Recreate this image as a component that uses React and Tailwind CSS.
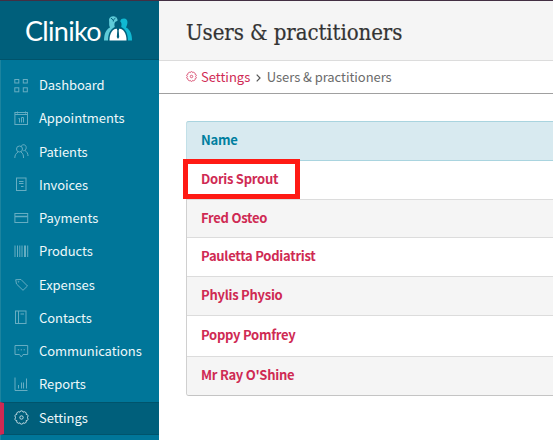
import React from 'react'
import clsx from 'clsx'

const GEAR_PATH =
  'M5.900 2.200Q6.100 .8 7.500 .8Q8.900 .8 9.100 2.200Q10.300 1.300 11.400 2.100Q12.800 3 12.100 4.300Q13.600 4.300 14 5.600Q14.400 7 13 7.500Q14.400 8.100 14 9.500Q13.600 10.800 12.100 10.700Q12.800 12 11.400 13Q10.300 13.700 9.100 12.800Q8.900 14.200 7.500 14.200Q6.100 14.200 5.900 12.800Q4.700 13.700 3.600 13Q2.200 12 2.900 10.700Q1.400 10.800 1 9.500Q.6 8.100 2 7.500Q.6 7 1 5.600Q1.400 4.300 2.900 4.300Q2.200 3 3.600 2.100Q4.700 1.300 5.900 2.200Z'

const icons = {
  dashboard: (
    <>
      <rect x=".8" y="1.5" width="4" height="3.5" />
      <rect x="9.3" y="1.5" width="4" height="3.5" />
      <rect x=".8" y="9.8" width="4" height="4" />
      <rect x="9.3" y="9.8" width="4" height="4" />
    </>
  ),
  appointments: (
    <>
      <rect x=".9" y="1.5" width="12.6" height="12" />
      <path d="M1 3.500H13.500M3.500 .5V2.500M11.500 .5V2.500M4.500 7.500H5.500V11.500M7.500 11.500V6.500H9.500V11.500" />
    </>
  ),
  patients: (
    <>
      <circle cx="5.5" cy="5" r="3" />
      <path d="M.8 14C.8 11 2 9.500 4 8M7 8C9 9.500 9.500 11 9.500 14M7 2.600C7.800 0 12.200 0 12.200 3.600C12.200 5.600 11 6.500 9.300 6.800M11 6.500C13 7.800 14 9.500 14 12" />
    </>
  ),
  invoices: (
    <>
      <rect x="2.5" y="1" width="9.5" height="12.5" />
      <path d="M5 4.500H9.500M5 6.500H9.500M7 9.500H9.500" />
    </>
  ),
  payments: (
    <>
      <rect x=".9" y="2.500" width="12.800" height="9" />
      <path d="M1 5.500H13.700" strokeWidth="1.500" />
    </>
  ),
  products: <path d="M1 1.500V13M3.500 1.500V13M5.800 1.500V13M8 1.500V13M10.500 1.500V13M11.500 1.500V13M13.700 1.500V13" />,
  expenses: (
    <>
      <path d="M1.700 2.700L7 2.500L13.500 9L9 13.300L2.500 7Z" />
      <circle cx="4.600" cy="4.800" r=".4" />
    </>
  ),
  contacts: (
    <>
      <rect x="1.500" y="1" width="10.500" height="12.500" />
      <path d="M4.500 1V13.500M6.500 4H10" />
    </>
  ),
  communications: (
    <>
      <path d="M1 1.500H13.700V10.500H9L7.300 13L5.500 10.500H1Z" />
      <path d="M3.800 5.800H5.100M6.700 5.800H8M9.600 5.800H10.900" />
    </>
  ),
  reports: <path d="M1 .5V13.500H13.500M4.500 11.500V8M7.500 11.500V5.500M9.500 11.500V5.500M12.500 11.500V1.500" />,
  settings: (
    <>
      <path d={GEAR_PATH} />
      <circle cx="7.500" cy="7.500" r="1.700" />
    </>
  )
}

const navItems = [
  { icon: 'dashboard', label: 'Dashboard' },
  { icon: 'appointments', label: 'Appointments' },
  { icon: 'patients', label: 'Patients' },
  { icon: 'invoices', label: 'Invoices' },
  { icon: 'payments', label: 'Payments' },
  { icon: 'products', label: 'Products' },
  { icon: 'expenses', label: 'Expenses' },
  { icon: 'contacts', label: 'Contacts' },
  { icon: 'communications', label: 'Communications' },
  { icon: 'reports', label: 'Reports' },
  { icon: 'settings', label: 'Settings', active: true }
]

const users = [
  { name: 'Doris Sprout', height: 'h-[39px]', highlighted: true },
  { name: 'Fred Osteo', height: 'h-[38px]' },
  { name: 'Pauletta Podiatrist', height: 'h-[39px]' },
  { name: 'Phylis Physio', height: 'h-[39px]' },
  { name: 'Poppy Pomfrey', height: 'h-[41px]' },
  { name: "Mr Ray O'Shine", height: 'h-[38px]' }
]

const Icon = ({ name, className }) => (
  <svg viewBox="0 0 15 15" fill="none" stroke="currentColor" strokeWidth="1" className={className}>
    {icons[name]}
  </svg>
)

const Logo = () => (
  <div className="flex h-[59px] shrink-0 items-center border-b border-[#00536b] bg-[#005f7b] pl-[25px]">
    <span className="w-[79px] pt-px whitespace-nowrap font-['Lato','Noto_Sans',sans-serif] text-[27px] leading-none tracking-[-0.7px] text-white">
      Cliniko
    </span>
    <svg viewBox="0 0 28 26" className="-mt-[5px] h-[26px] w-[28px] shrink-0">
      {/* left figure */}
      <path d="M0 25.500C0 19 2 14.500 6 12.500C4.500 10 5.500 8 5 4.500C5.500 0 13 0 13.500 4.500C13.500 8 12.500 9 12.500 11V25.500Z" fill="#5fcbd8" />
      <path d="M6.800 3L9.300 5L11.500 3M9.300 5V6.500" fill="none" stroke="#005f7b" strokeWidth="1" />
      {/* right figure */}
      <path d="M15.500 25.500V10C16.500 7 15.500 3.500 20 3.500C24.500 3.500 24 9 22 12.500C26 14.500 28 19 28 25.500Z" fill="#10b9d2" />
      {/* front figure */}
      <path d="M4 26C4 19 6 14.500 10.800 12C9.800 8 11 6 14 6C17 6 18.200 8 17.200 12C22 14.500 24 19 24 26Z" fill="#005f7b" />
      <path d="M5.500 25.500C5.500 18 8.500 13.500 14 13.500C19.500 13.500 22.500 18 22.500 25.500Z" fill="#fff" />
      <path d="M12.500 13H15.500L14.700 15.500L15.200 22L14 24L12.800 22L13.300 15.500Z" fill="#005f7b" />
    </svg>
  </div>
)

const NavItem = ({ icon, label, active }) => (
  <li
    className={clsx(
      'flex h-[33.25px] items-center pb-[2px] text-[13px] tracking-[-0.07px] text-[#eef8fa]',
      active
        ? 'border-y border-l-4 border-y-[#00546c] border-l-[#cf2a53] bg-[#005f7b] pl-[10px]'
        : 'pl-[14px]'
    )}
  >
    <Icon
      name={icon}
      className={clsx('mr-[10px] h-[15px] w-[15px] shrink-0', active ? 'text-[#c3dce3]' : 'text-[#66adc2]')}
    />
    <span className="pb-px leading-none">{label}</span>
  </li>
)

const Sidebar = () => (
  <aside className="flex w-[159px] shrink-0 flex-col bg-[#007699] shadow-[inset_1px_0_0_#1c849f]">
    <Logo />
    <ul className="pt-[9.5px]">
      {navItems.map((item) => (
        <NavItem key={item.label} {...item} />
      ))}
    </ul>
  </aside>
)

const App = () => {
  return (
    <div className="flex h-[440px] w-[553px] flex-col overflow-hidden bg-white font-['Noto_Sans_CJK_SC','Noto_Sans',sans-serif]">
      <div className="h-px shrink-0 bg-[#432f43]" />
      <div className="flex min-h-0 flex-1">
        <Sidebar />

        <main className="min-w-0 flex-1">
          <header className="flex h-[60px] items-center border-b border-[#dcdcdc] bg-[#f5f5f5] pt-[5px] pl-[27px]">
            <h1 className="whitespace-nowrap font-['DejaVu_Serif_Condensed','DejaVu_Serif',serif] text-[22px] leading-none tracking-[-0.08px] text-[#333] [-webkit-text-stroke:0.2px_#333]">
              Users &amp; practitioners
            </h1>
          </header>

          <nav className="flex h-[33px] items-center border-b border-[#a0a0a0] pb-[2px] pl-[27px] text-[13px] leading-none">
            <Icon name="settings" className="mt-px mr-1 h-[11px] w-[11px] text-[#d02a55]" />
            <span className="text-[#d02a55]">Settings</span>
            <svg viewBox="0 0 5 8" fill="none" stroke="#555" strokeWidth="1.2" className="mt-[3px] mr-[5.5px] ml-[6px] h-[8px] w-[5px]">
              <path d="M.7 .7L4 4L.7 7.300" />
            </svg>
            <span className="tracking-[-0.05px] text-[#6b6b6b]">Users &amp; practitioners</span>
          </nav>

          <section className="mt-[27px] ml-[27px] rounded-l-[3px] border-b border-l border-b-[#c4c4c4] border-l-[#d0d0d0] text-[13px] font-bold leading-none tracking-[-0.26px]">
            <div className="-ml-px flex h-[40px] items-center rounded-tl-[3px] border-y border-l border-[#a9d4df] border-l-[#c2e0e8] bg-[#d8eaf0] pb-[3px] pl-[14px] text-[#007f9f]">
              Name
            </div>
            {users.map((user, index) => (
              <div
                key={user.name}
                className={clsx(
                  'relative flex items-center pb-[3px] pl-[14px] text-[#cf2a53]',
                  user.height,
                  index % 2 === 1 && 'bg-[#f5f5f5]',
                  index < users.length - 1 ? 'border-b border-[#dcdcdc]' : 'rounded-bl-[3px]'
                )}
              >
                {user.name}
                {user.highlighted && (
                  <div className="absolute -top-[2px] -left-[4px] h-[40px] w-[117px] border-[5px] border-[#ff1a14]" />
                )}
              </div>
            ))}
          </section>
        </main>
      </div>
    </div>
  )
}

export default App
